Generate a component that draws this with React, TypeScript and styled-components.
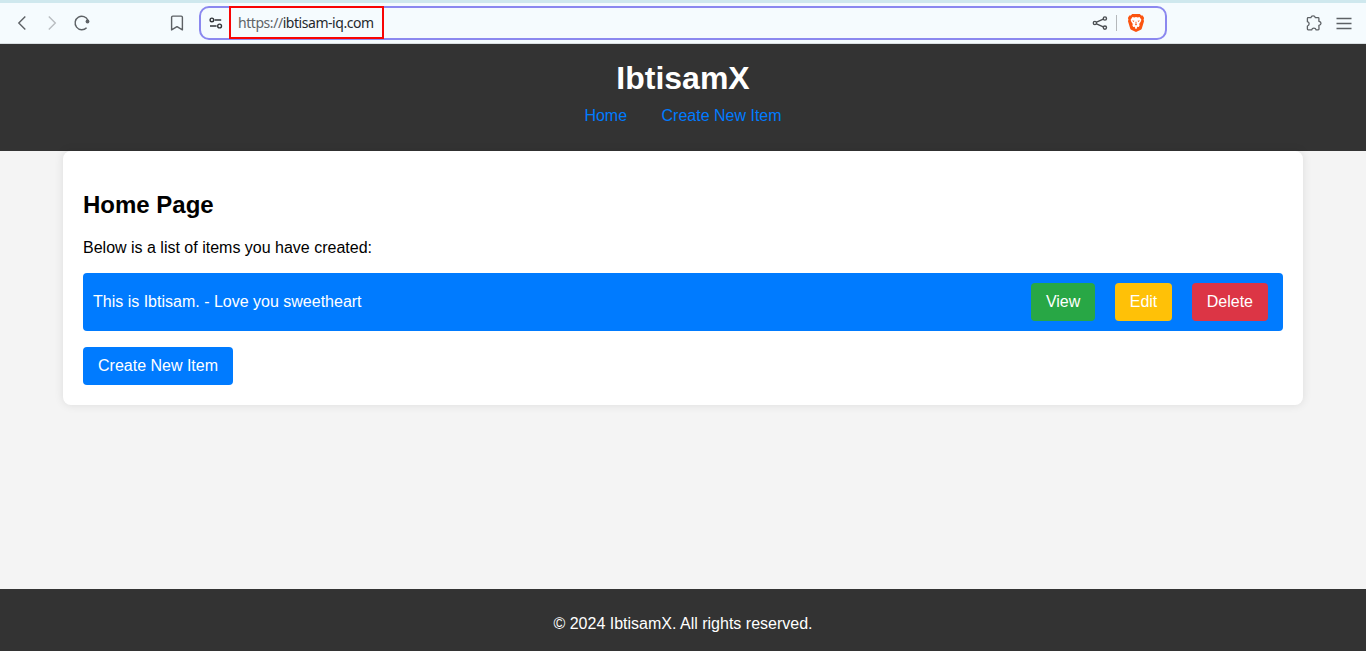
import React from "react";
import styled, { createGlobalStyle } from "styled-components";

const GlobalStyle = createGlobalStyle`
  * { box-sizing: border-box; }
  html, body { margin: 0; padding: 0; }
  body {
    background: #f4f4f4;
    color: #000;
    font: 16px/18px "Liberation Sans", Arial, sans-serif;
    overflow: hidden;
  }
`;

const Page = styled.div`
  display: flex;
  flex-direction: column;
  height: 651px;
`;

const Toolbar = styled.div`
  display: flex;
  flex: none;
  align-items: center;
  height: 44px;
  padding: 0 13px;
  border-top: 3px solid #cfe8ee;
  border-bottom: 1px solid #d9dfe2;
  background: #f5fbfe;
  color: #5d6165;
`;

const IconButton = styled.span<{ $gap?: number; $color?: string }>`
  display: flex;
  flex: none;
  width: 18px;
  height: 18px;
  margin-left: ${(p) => p.$gap ?? 0}px;
  color: ${(p) => p.$color ?? "inherit"};

  svg {
    display: block;
    width: 18px;
    height: 18px;
    fill: none;
    stroke: currentColor;
    stroke-width: 1.4;
  }
`;

const AddressBar = styled.div`
  display: flex;
  flex: none;
  align-items: center;
  width: 968px;
  height: 34px;
  margin: 0 138px 0 13px;
  padding: 0 20px 0 6px;
  border: 2px solid #8b88ef;
  border-radius: 10px;
  color: #4a4e52;
`;

const Address = styled.div`
  display: flex;
  align-items: center;
  width: 155px;
  height: 33px;
  margin: -2px auto -1px 4px;
  padding-left: 7px;
  border: 2px solid #f80404;
  color: #25292d;
  font: 14px/20px "Noto Sans", sans-serif;
  letter-spacing: -0.45px;
  white-space: nowrap;
`;

const Scheme = styled.span`
  color: #5f6468;
`;

const Divider = styled.span`
  width: 1px;
  height: 16px;
  margin: 0 10px 0 7px;
  background: #b4b8bb;
`;

const Header = styled.header`
  flex: none;
  height: 107px;
  padding-top: 16px;
  background: #333;
  color: #fff;
  text-align: center;
`;

const Brand = styled.h1`
  margin: 0 0 11px;
  font-size: 32px;
  line-height: 36px;
`;

const Nav = styled.nav`
  display: flex;
  justify-content: center;
  gap: 34.45px;
`;

const NavLink = styled.a`
  color: #007bff;
`;

const Card = styled.main`
  width: 1240px;
  margin: 0 auto;
  padding: 20px;
  border-radius: 8px;
  background: #fff;
  box-shadow: 0 0 10px rgba(0, 0, 0, 0.1);
`;

const Title = styled.h2`
  margin: 20px 0;
  font-size: 24px;
  line-height: 28px;
`;

const Intro = styled.p`
  margin: 0 0 16px;
`;

const ItemRow = styled.div`
  display: flex;
  align-items: center;
  justify-content: space-between;
  height: 58px;
  margin-bottom: 16px;
  padding: 0 15px 0 10px;
  border-radius: 4px;
  background: #007bff;
  color: #fff;
`;

const Actions = styled.div`
  display: flex;
  gap: 19.45px;
`;

const Button = styled.a<{ $color: string }>`
  display: inline-block;
  padding: 10px 15px;
  border-radius: 4px;
  background: ${(p) => p.$color};
  color: #fff;
  vertical-align: top;
`;

const Footer = styled.footer`
  flex: none;
  height: 62px;
  margin-top: auto;
  padding-top: 26px;
  background: #333;
  color: #fff;
  text-align: center;
`;

export default function App() {
  return (
    <>
      <GlobalStyle />
      <Page>
        <Toolbar>
          <IconButton>
            <svg viewBox="0 0 18 18"><path d="M12.3 2.4 5.8 9l6.5 6.6" /></svg>
          </IconButton>
          <IconButton $gap={12} $color="#b9bdc1">
            <svg viewBox="0 0 18 18"><path d="m5.8 2.4 6.5 6.6-6.5 6.6" /></svg>
          </IconButton>
          <IconButton $gap={12}>
            <svg viewBox="0 0 18 18">
              <path d="M13.6 13.7A6.7 6.7 0 1 1 15 6.4" />
              <circle cx="14.5" cy="7.5" r="1.9" fill="currentColor" stroke="none" />
            </svg>
          </IconButton>
          <IconButton $gap={77}>
            <svg viewBox="0 0 18 18"><path d="M3.6 15.9V3.3q0-1.2 1.2-1.2h8.4q1.2 0 1.2 1.2v12.6L9 12.6z" strokeLinejoin="round" /></svg>
          </IconButton>
          <AddressBar>
            <IconButton $color="#303438">
              <svg viewBox="0 0 18 18">
                <circle cx="4.9" cy="5.9" r="1.8" />
                <path d="M7.6 6h6.6M3 12h6.6" />
                <circle cx="12.6" cy="12" r="1.9" />
              </svg>
            </IconButton>
            <Address>
              <Scheme>https://</Scheme>ibtisam-iq.com
            </Address>
            <IconButton>
              <svg viewBox="0 0 18 18">
                <circle cx="3.9" cy="9" r="1.6" />
                <circle cx="13.9" cy="4.5" r="1.6" />
                <circle cx="13.9" cy="13.6" r="1.6" />
                <path d="m5.5 8.2 6.8-3.1M5.5 9.8l6.8 3.1" />
              </svg>
            </IconButton>
            <Divider />
            <IconButton>
              <svg viewBox="0 0 18 18">
                <path d="M5.2 0h7.6l1.5 1.5 1.4-.1L17.1 4l-.5 1.5.4 1.8-2.1 6.9q-.3 1-1.1 1.6L9 18l-4.8-2.2q-.8-.6-1.1-1.6L1 7.3l.4-1.8L.9 4l1.4-2.6 1.4.1z" fill="#fb5410" stroke="none" />
                <path d="m5.5 3 1.8.4L9 3l1.7.4 1.8-.4 1.9 2.8-.6 1.8-1.6 2.3.4 1.6-.8 1.5-1.3-.3-.7.5.5.8L9 15l-1.3-1 .5-.8-.7-.5-1.3.3-.8-1.5.4-1.6-1.6-2.3-.6-1.8z" fill="#fff" stroke="none" />
                <path d="m5 6.4 2.4.3-.7 1.2zm8 0-2.4.3.7 1.2zM8.5 7.8h1L9.4 10l.7.6-1.1.8-1.1-.8.7-.6z" fill="#fb5410" stroke="none" />
              </svg>
            </IconButton>
          </AddressBar>
          <IconButton>
            <svg viewBox="0 0 18 18">
              <path d="M3.1 3.7H5.9C6.4 1.3 9.8 1.3 10.3 3.7H13.2Q13.9 3.7 13.9 4.4V7.3C16.7 7.6 16.7 11 13.9 11.4L14 15Q14 15.8 13.2 15.8H11.1C10.6 13.5 7.2 13.5 6.7 15.8H3.1Q2.4 15.8 2.4 15V12C4.7 11.3 4.7 8.4 2.4 7.7V4.4Q2.4 3.7 3.1 3.7Z" strokeWidth="1.3" strokeLinejoin="round" />
            </svg>
          </IconButton>
          <IconButton $gap={12}>
            <svg viewBox="0 0 18 18"><path d="M1.5 4.5h15M1.5 9.5h15M1.5 14.5h15" /></svg>
          </IconButton>
        </Toolbar>
        <Header>
          <Brand>IbtisamX</Brand>
          <Nav>
            <NavLink>Home</NavLink>
            <NavLink>Create New Item</NavLink>
          </Nav>
        </Header>
        <Card>
          <Title>Home Page</Title>
          <Intro>Below is a list of items you have created:</Intro>
          <ItemRow>
            <span>This is Ibtisam. - Love you sweetheart</span>
            <Actions>
              <Button $color="#28a745">View</Button>
              <Button $color="#ffc107">Edit</Button>
              <Button $color="#dc3545">Delete</Button>
            </Actions>
          </ItemRow>
          <Button $color="#007bff">Create New Item</Button>
        </Card>
        <Footer>© 2024 IbtisamX. All rights reserved.</Footer>
      </Page>
    </>
  );
}
